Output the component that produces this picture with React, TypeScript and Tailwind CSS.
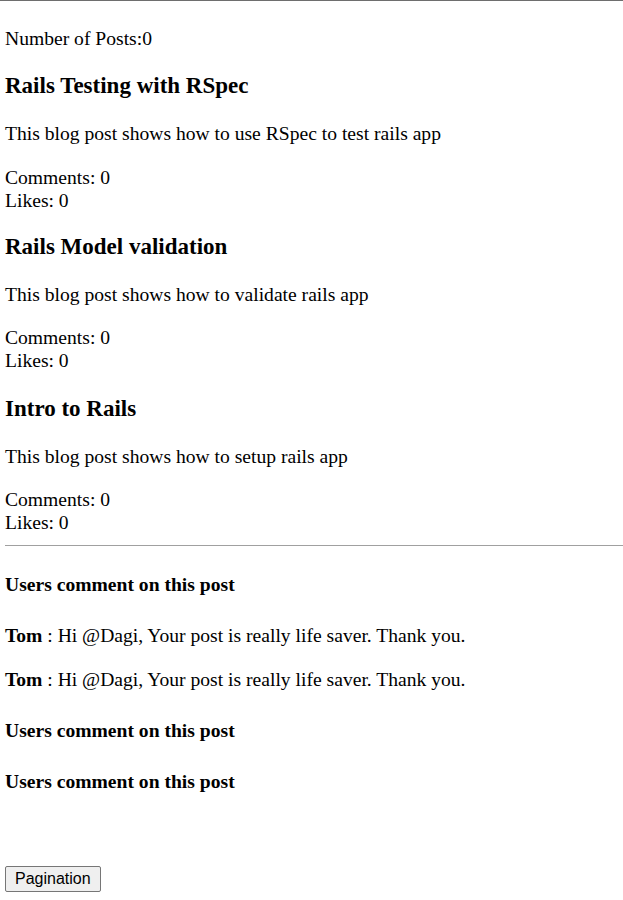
const posts = [
  { title: "Rails Testing with RSpec", text: "This blog post shows how to use RSpec to test rails app", gap: "mt-[22px]" },
  { title: "Rails Model validation", text: "This blog post shows how to validate rails app", gap: "mt-[21px]" },
  { title: "Intro to Rails", text: "This blog post shows how to setup rails app", gap: "mt-[23px]" },
];

export default function App() {
  return (
    <div className="min-h-screen bg-white text-black font-['Liberation_Serif','Times_New_Roman',serif] text-[19.6px] leading-[23px]">
      <div className="border-t border-[#6e6e6e]" />
      <div className="px-[5px]">
        <p className="mt-[26px]">Number of Posts:0</p>

        {posts.map((post, i) => (
          <section key={post.title}>
            <h2 className={`${post.gap} text-[23px] leading-[28px] font-bold`}>{post.title}</h2>
            <p className="mt-[22px]">{post.text}</p>
            <div className={i === 0 ? "mt-[21px]" : "mt-[20px]"}>
              <p>Comments: 0</p>
              <p>Likes: 0</p>
            </div>
          </section>
        ))}
      </div>

      <hr className="mt-[11px] ml-[5px] border-0 border-t border-[#a0a0a0]" />

      <div className="px-[5px]">
        <h4 className="mt-[27px] font-bold">Users comment on this post</h4>
        <p className="mt-[28px]">
          <strong>Tom</strong> : Hi @Dagi, Your post is really life saver. Thank you.
        </p>
        <p className="mt-[21px]">
          <strong>Tom</strong> : Hi @Dagi, Your post is really life saver. Thank you.
        </p>
        <h4 className="mt-[28px] font-bold">Users comment on this post</h4>
        <h4 className="mt-[28px] font-bold">Users comment on this post</h4>

        <button className="mt-[73px] h-[26px] px-[9px] bg-[#efefef] border border-[#767676] rounded-[2px] font-['Liberation_Sans',Arial,sans-serif] text-[16px] leading-[18px] text-black">
          Pagination
        </button>
      </div>
    </div>
  );
}
